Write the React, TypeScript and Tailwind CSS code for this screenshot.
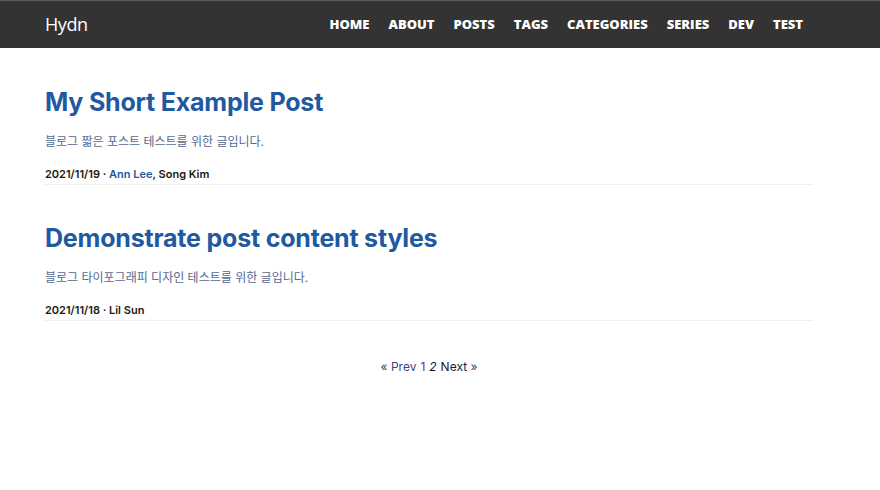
const posts = [
  {
    title: "My Short Example Post",
    summary: "블로그 짧은 포스트 테스트를 위한 글입니다.",
    date: "2021/11/19",
    authors: [
      { name: "Ann Lee", link: true },
      { name: "Song Kim", link: false },
    ],
  },
  {
    title: "Demonstrate post content styles",
    summary: "블로그 타이포그래피 디자인 테스트를 위한 글입니다.",
    date: "2021/11/18",
    authors: [{ name: "Lil Sun", link: false }],
  },
];

const menu = ["HOME", "ABOUT", "POSTS", "TAGS", "CATEGORIES", "SERIES", "DEV", "TEST"];

export default function App() {
  return (
    <div className="min-h-[490px] w-[880px] bg-white font-['Inter','Noto_Sans_CJK_KR',sans-serif]">
      {/* Header */}
      <header className="h-[48px] bg-[#333333] border-t border-[#5a5a5a]">
        <div className="w-[768px] ml-[45px] h-full flex items-center justify-between">
          <span className="text-white text-[18px] font-medium font-['Open_Sans',sans-serif] tracking-tight">Hydn</span>
          <nav className="flex items-center gap-[19px] mr-[10px]">
            {menu.map((m) => (
              <a key={m} className="text-white text-[13px] font-extrabold font-['Open_Sans',sans-serif] tracking-[0px]">
                {m}
              </a>
            ))}
          </nav>
        </div>
      </header>

      {/* Posts */}
      <main className="w-[768px] ml-[45px] pt-[39px]">
        {posts.map((p, i) => (
          <article key={i} className={i > 0 ? "mt-[38px]" : ""}>
            <h2 className="text-[25px] leading-[30px] font-bold text-[#2159a1] tracking-[-0.2px]">{p.title}</h2>
            <p className="mt-[16px] text-[12px] leading-[18px] text-[#55698f]">{p.summary}</p>
            <div className="mt-[15px] pb-[2px] border-b border-[#efefef] text-[11px] leading-[16px] font-semibold text-[#1a1a1a]">
              {p.date} ·{" "}
              {p.authors.map((a, j) => (
                <span key={j}>
                  {j > 0 && ", "}
                  <span className={a.link ? "text-[#2159a1]" : ""}>{a.name}</span>
                </span>
              ))}
            </div>
          </article>
        ))}

        {/* Pagination */}
        <div className="mt-[37px] flex justify-center gap-[4px] text-[12px] leading-[18px]">
          <a className="text-[#4b3a86]">« Prev</a>
          <a className="text-[#4b3a86]">1</a>
          <span className="italic text-[#111]">2</span>
          <a className="text-[#1a1a33]">
            Next <span className="text-[#4b3a86]">»</span>
          </a>
        </div>
      </main>
    </div>
  );
}
